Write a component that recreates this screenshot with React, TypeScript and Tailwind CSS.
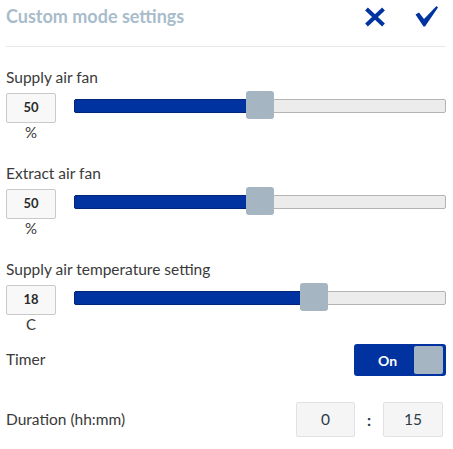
import React from "react";

const BLUE = "#0033a0";

function Slider({ pct }: { pct: number }) {
  const thumbLeft = pct * (372 - 28);
  return (
    <div className="relative ml-[18px] mt-[6px] h-[14px] flex-1">
      <div className="absolute inset-0 rounded-[2px] border border-[#b4b4b4] bg-[#ececec]" />
      <div
        className="absolute left-0 top-0 h-[14px] rounded-l-[2px] border border-[#00257a] bg-[#0033a0]"
        style={{ width: thumbLeft + 14 }}
      />
      <div
        className="absolute top-[-8px] h-[28px] w-[28px] rounded-[3px] bg-[#a5b6c2]"
        style={{ left: thumbLeft }}
      />
    </div>
  );
}

function SliderSection({
  label,
  value,
  unit,
  pct,
}: {
  label: string;
  value: string;
  unit: string;
  pct: number;
}) {
  return (
    <div className="flex flex-col">
      <div className="h-[20px] text-[15.5px] leading-[20px] text-[#3a3a3a]">{label}</div>
      <div className="mt-[6px] flex items-start">
        <div className="flex h-[30px] w-[50px] items-center justify-center rounded-[2px] border border-[#c9c9c9] bg-[#f8f8f8] text-[13px] font-bold text-[#2b2b2b]">
          {value}
        </div>
        <Slider pct={pct} />
      </div>
      <div className="w-[50px] text-center text-[15px] leading-[18px] text-[#3a3a3a]">{unit}</div>
    </div>
  );
}

export default function App() {
  return (
    <div
      className="h-[449px] w-[453px] bg-white pl-[6px] pr-[7px]"
      style={{ fontFamily: "Lato, 'Liberation Sans', sans-serif" }}
    >
      <div className="flex h-[47px] items-start justify-between border-b border-[#e8e8e8] pt-[4px]">
        <div className="text-[18px] font-bold leading-[24px] text-[#a8bccb]">Custom mode settings</div>
        <div className="mr-[7px] mt-[2px] flex items-center gap-[29px]">
          <svg width="22" height="20" viewBox="0 0 22 20">
            <path d="M2.5 2 L19.5 18 M19.5 2 L2.5 18" stroke={BLUE} strokeWidth="4" strokeLinecap="butt" />
          </svg>
          <svg width="24" height="22" viewBox="0 0 24 22">
            <path d="M0.5 8.5 L4 6.5 L9 13 L21.5 0 L23 1.5 L10 20.5 L8.5 20.5 Z" fill={BLUE} />
          </svg>
        </div>
      </div>

      <div className="mt-[20px] flex flex-col gap-[22px]">
        <SliderSection label="Supply air fan" value="50" unit="%" pct={0.5} />
        <SliderSection label="Extract air fan" value="50" unit="%" pct={0.5} />
        <SliderSection label="Supply air temperature setting" value="18" unit="C" pct={0.657} />
      </div>

      <div className="mt-[11px] flex h-[32px] items-center justify-between">
        <div className="text-[15.5px] text-[#3a3a3a]">Timer</div>
        <div className="flex h-[32px] w-[92px] items-center rounded-[3px] bg-[#0033a0] pr-[3px]">
          <span className="ml-[24px] text-[14px] font-bold text-white">On</span>
          <div className="ml-auto h-[28px] w-[29px] rounded-[2px] bg-[#a5b6c2]" />
        </div>
      </div>

      <div className="mt-[26px] flex h-[35px] items-center justify-between">
        <div className="text-[15.5px] text-[#3a3a3a]">Duration (hh:mm)</div>
        <div className="mr-[3px] flex items-center">
          <div className="flex h-[35px] w-[59px] items-center justify-center rounded-[2px] border border-[#e2e2e2] bg-[#f5f5f5] text-[15.5px] text-[#2e3a48]">
            0
          </div>
          <div className="w-[28px] text-center text-[16px] font-bold text-[#2e3a48]">:</div>
          <div className="flex h-[35px] w-[60px] items-center justify-center rounded-[2px] border border-[#e2e2e2] bg-[#f5f5f5] text-[15.5px] text-[#2e3a48]">
            15
          </div>
        </div>
      </div>
    </div>
  );
}
